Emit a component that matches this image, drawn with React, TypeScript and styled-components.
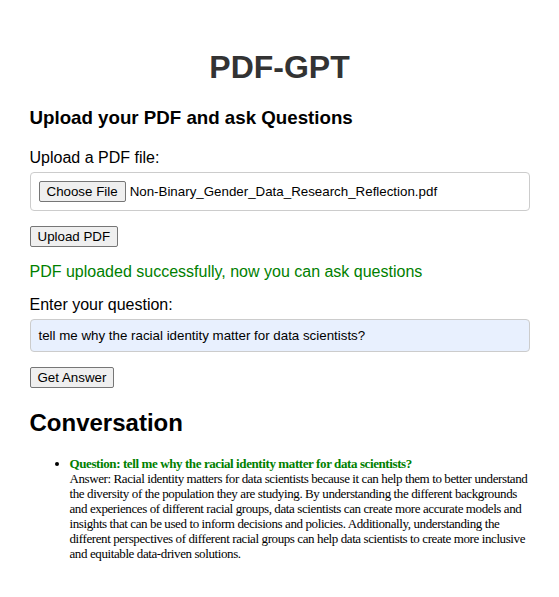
import React from "react";
import styled, { createGlobalStyle } from "styled-components";

const Global = createGlobalStyle`
  body {
    margin: 8px;
    background: #ffffff;
    font-family: "Liberation Sans", Arial, sans-serif;
    color: #000;
  }
`;

const Container = styled.div`
  max-width: 500px;
  margin: 0 auto;
  padding: 20px;
`;

const Title = styled.h1`
  font-size: 32px;
  font-weight: bold;
  color: #333333;
  text-align: center;
  margin: 21px 0;
`;

const Subtitle = styled.h3`
  font-size: 18.72px;
  font-weight: bold;
  margin: 18px 0 20px;
`;

const Field = styled.div`
  margin-bottom: 15px;
`;

const Label = styled.label`
  display: block;
  font-size: 16px;
  margin-bottom: 5px;
`;

const Box = styled.div<{ $filled?: boolean }>`
  box-sizing: border-box;
  width: 100%;
  border: 1px solid #cccccc;
  border-radius: 4px;
  padding: 8px;
  background: ${(p) => (p.$filled ? "#e8f0fe" : "#ffffff")};
  display: flex;
  align-items: center;
  gap: 4px;
  font-size: 13.33px;
`;

const Button = styled.button`
  font-family: "Liberation Sans", Arial, sans-serif;
  font-size: 13.33px;
  color: #000;
  background: #efefef;
  border: 1px solid #767676;
  border-radius: 2px;
  padding: 1px 7px;
  height: 21px;
`;

const Status = styled.p`
  color: #008000;
  font-size: 16px;
  margin: 16px 0 15px;
`;

const Heading = styled.h2`
  font-size: 24px;
  font-weight: bold;
  margin: 21px 0 19px;
`;

const List = styled.ul`
  padding-left: 40px;
  margin: 12px 0;
  font-family: "Liberation Serif", "Times New Roman", serif;
  font-size: 13px;
  letter-spacing: -0.4px;
  line-height: 15px;
`;

const Question = styled.strong`
  display: block;
  color: #008000;
`;

export default function App() {
  return (
    <>
      <Global />
      <Container>
        <Title>PDF-GPT</Title>
        <Subtitle>Upload your PDF and ask Questions</Subtitle>
        <Field>
          <Label>Upload a PDF file:</Label>
          <Box>
            <Button>Choose File</Button>
            <span>Non-Binary_Gender_Data_Research_Reflection.pdf</span>
          </Box>
        </Field>
        <Button>Upload PDF</Button>
        <Status>PDF uploaded successfully, now you can ask questions</Status>
        <Field>
          <Label>Enter your question:</Label>
          <Box $filled>
            <span>tell me why the racial identity matter for data scientists?</span>
          </Box>
        </Field>
        <Button>Get Answer</Button>
        <Heading>Conversation</Heading>
        <List>
          <li>
            <Question>Question: tell me why the racial identity matter for data scientists?</Question>
            Answer: Racial identity matters for data scientists because it can help them to better understand the
            diversity of the population they are studying. By understanding the different backgrounds and experiences
            of different racial groups, data scientists can create more accurate models and insights that can be used
            to inform decisions and policies. Additionally, understanding the different perspectives of different racial
            groups can help data scientists to create more inclusive and equitable data-driven solutions.
          </li>
        </List>
      </Container>
    </>
  );
}
